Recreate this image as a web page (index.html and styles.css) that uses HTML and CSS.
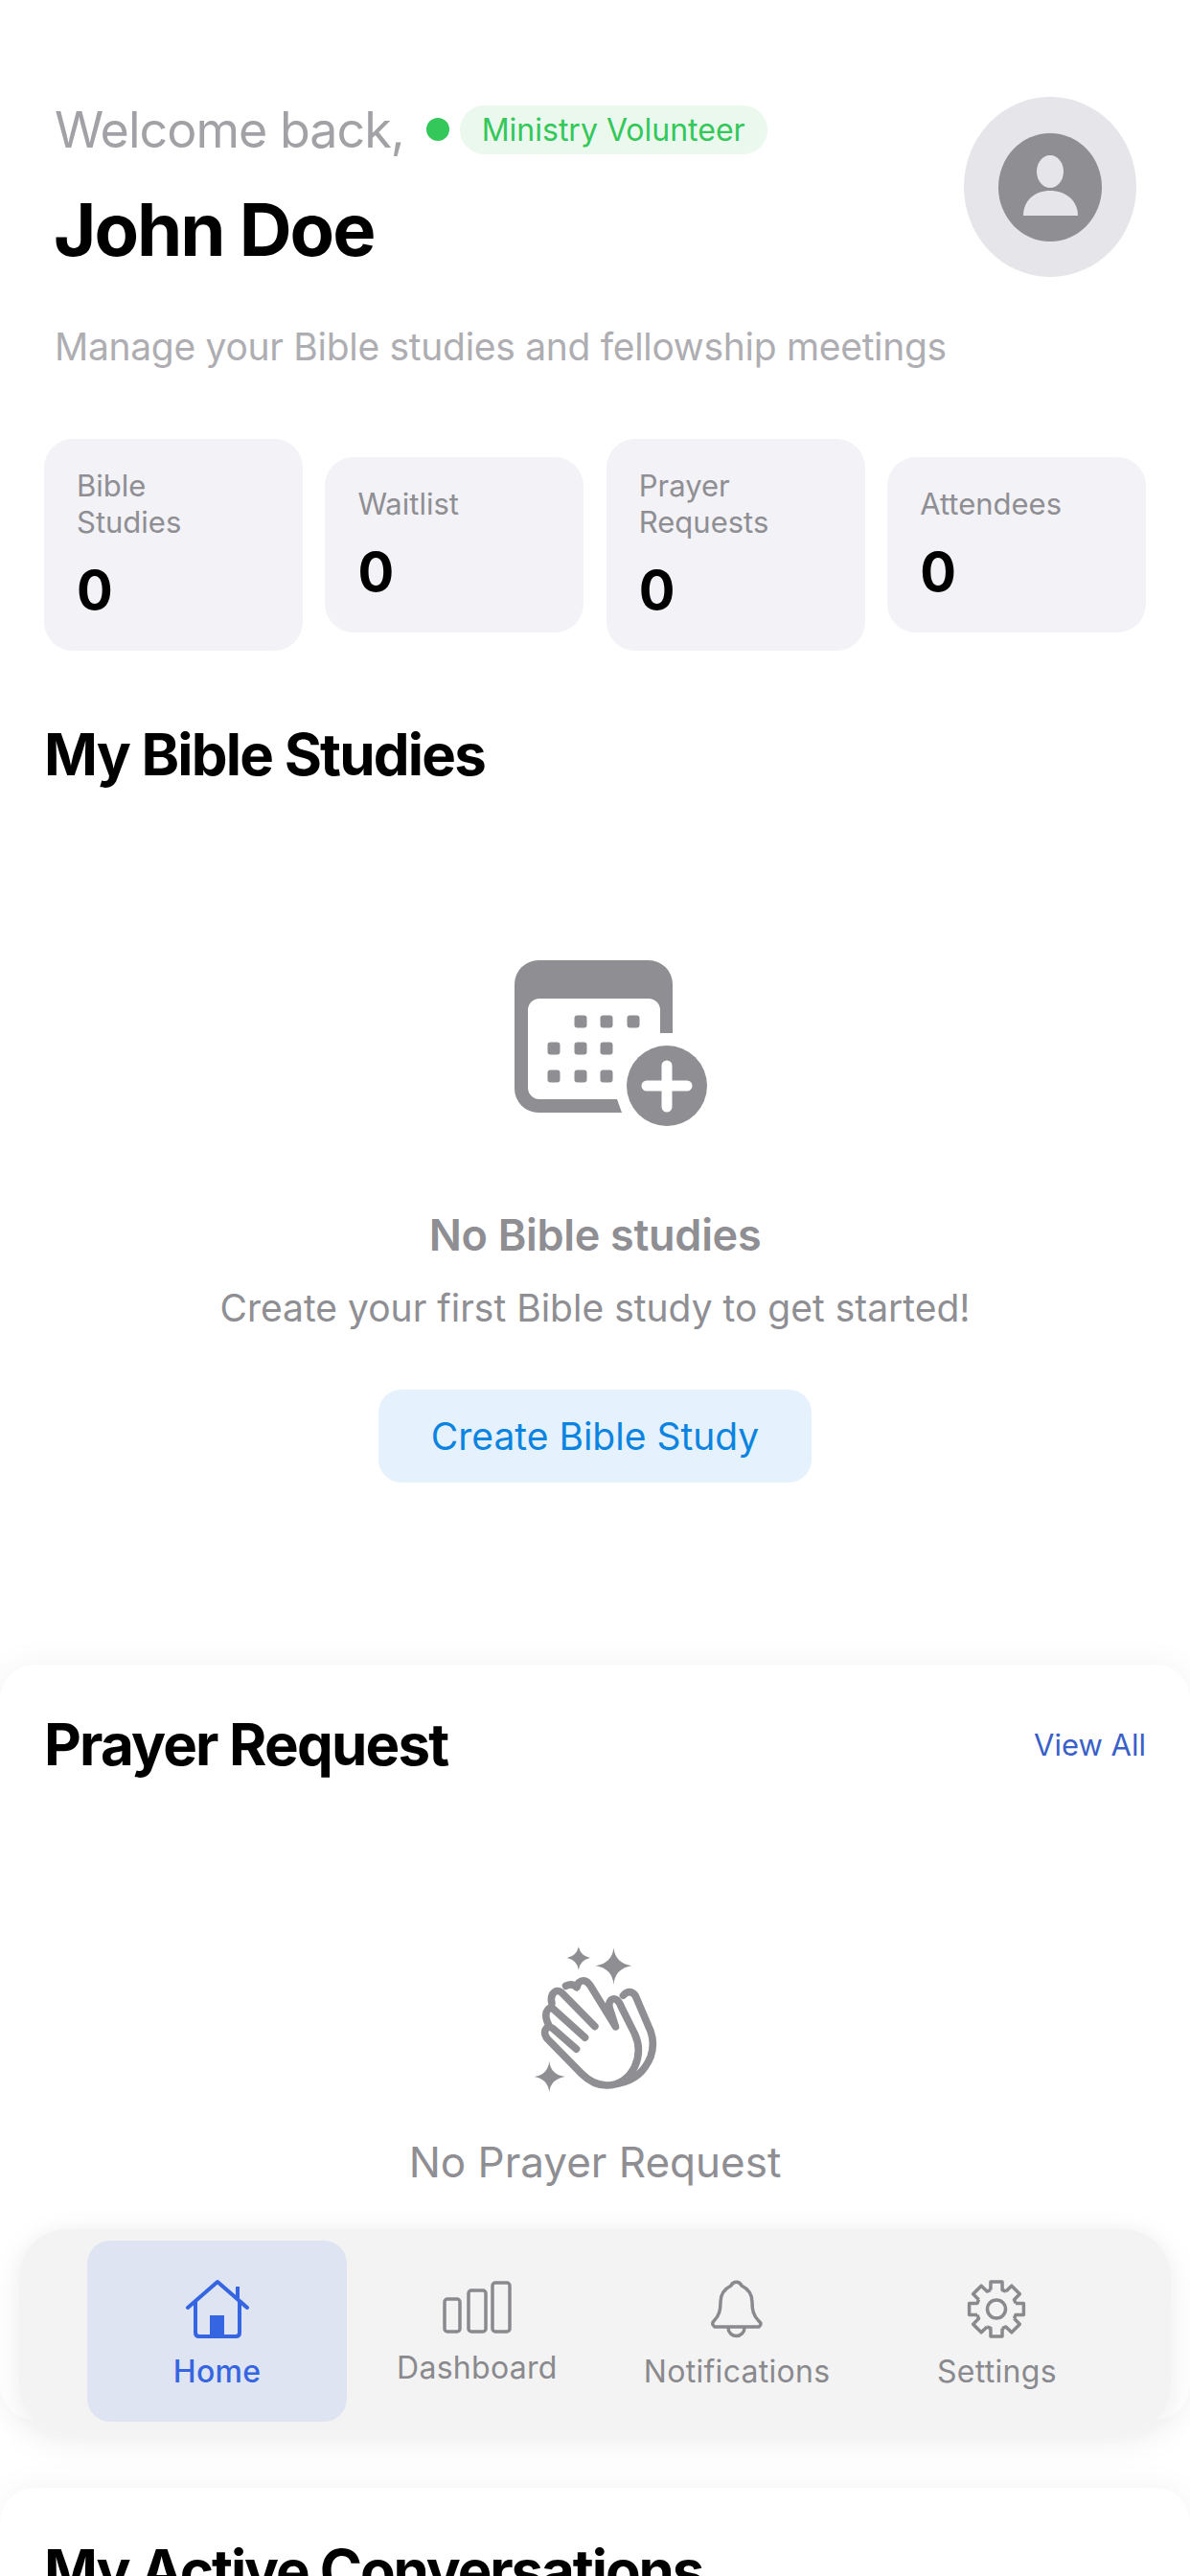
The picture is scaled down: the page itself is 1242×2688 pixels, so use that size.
FILE: index.html
```html
<!DOCTYPE html>
<html lang="en">
<head>
    <meta charset="UTF-8">
    <meta name="viewport" content="width=device-width, initial-scale=1.0">
    <title>Home</title>
    <link rel="stylesheet" href="styles.css">
</head>
<body>
    <main class="page">
        <header class="header">
            <div class="header-text">
                <div class="welcome-row">
                    <span class="welcome">Welcome back,</span>
                    <span class="status-dot"></span>
                    <span class="role-badge">Ministry Volunteer</span>
                </div>
                <h1 class="user-name">John Doe</h1>
                <p class="subtitle">Manage your Bible studies and fellowship meetings</p>
            </div>
            <div class="avatar">
                <svg class="avatar-icon" viewBox="0 0 108 113">
                    <ellipse cx="54" cy="40" rx="14" ry="17" fill="#e5e5ea"/>
                    <path d="M26 86 C26 70 38 60 54 60 C70 60 83 70 83 86 Z" fill="#e5e5ea"/>
                </svg>
            </div>
        </header>

        <section class="stats">
            <div class="stat-card">
                <div class="stat-label">Bible<br>Studies</div>
                <div class="stat-value">0</div>
            </div>
            <div class="stat-card">
                <div class="stat-label">Waitlist</div>
                <div class="stat-value">0</div>
            </div>
            <div class="stat-card">
                <div class="stat-label">Prayer<br>Requests</div>
                <div class="stat-value">0</div>
            </div>
            <div class="stat-card">
                <div class="stat-label">Attendees</div>
                <div class="stat-value">0</div>
            </div>
        </section>

        <section class="studies">
            <h2 class="section-title">My Bible Studies</h2>
            <div class="empty-studies">
                <svg class="calendar-icon" viewBox="38 32 202 174">
                    <path fill-rule="evenodd" fill="#8e8e93" d="M63 32 H178 A25 25 0 0 1 203 57 V108 H190 V84 A12 12 0 0 0 178 72 H64 A12 12 0 0 0 52 84 V165 A12 12 0 0 0 64 177 H145 L150 191 H63 A25 25 0 0 1 38 166 V57 A25 25 0 0 1 63 32 Z"/>
                    <g fill="#8e8e93">
                        <rect x="100.500" y="89.500" width="13" height="13" rx="3"/>
                        <rect x="127.500" y="89.500" width="13" height="13" rx="3"/>
                        <rect x="155.500" y="89.500" width="13" height="13" rx="3"/>
                        <rect x="72.500" y="117.500" width="13" height="13" rx="3"/>
                        <rect x="100.500" y="117.500" width="13" height="13" rx="3"/>
                        <rect x="127.500" y="117.500" width="13" height="13" rx="3"/>
                        <rect x="72.500" y="146.500" width="13" height="13" rx="3"/>
                        <rect x="100.500" y="146.500" width="13" height="13" rx="3"/>
                        <rect x="127.500" y="146.500" width="13" height="13" rx="3"/>
                        <circle cx="197" cy="163" r="42"/>
                    </g>
                    <path d="M197 142 V185 M176 163 H218" stroke="#fff" stroke-width="11" stroke-linecap="round"/>
                </svg>
                <div class="empty-title">No Bible studies</div>
                <div class="empty-text">Create your first Bible study to get started!</div>
                <button class="create-btn">Create Bible Study</button>
            </div>
        </section>

        <section class="card prayer-card">
            <div class="card-head">
                <h2 class="section-title">Prayer Request</h2>
                <a class="view-all">View All</a>
            </div>
            <div class="empty-prayer">
                <svg class="clap-icon" viewBox="100 85 410 475">
                    <g fill="#8e8e93">
                        <path d="M252 93 Q256 123 288 130 Q256 137 252 168 Q248 137 216 130 Q248 123 252 93 Z"/>
                        <path d="M362 98 Q366 146 418 155 Q366 164 362 214 Q358 164 306 155 Q358 146 362 98 Z"/>
                        <path d="M160 454 Q164 496 210 503 Q164 510 160 552 Q156 510 113 503 Q156 496 160 454 Z"/>
                    </g>
                    <g fill="none" stroke="#8e8e93" stroke-width="23" stroke-linecap="round" stroke-linejoin="round">
                        <path d="M245 416 L172 352 Q155 340 147 358 Q143 372 156 386 L262 494 Q298 530 340 530 Q398 530 428 472 Q452 420 428 368 L386 284 Q372 250 354 262 Q344 272 350 290 L368 346 L288 216 Q272 192 252 208 L246 222"/>
                        <path d="M272 380 L172 290 Q158 282 151 300 Q146 318 158 340"/>
                        <path d="M303 345 L200 240 Q184 226 170 244 Q164 256 168 272"/>
                        <path d="M246 222 Q232 208 212 218"/>
                        <path d="M392 248 Q412 226 430 248 L478 360 Q492 400 478 440 Q450 510 378 524"/>
                    </g>
                </svg>
                <div class="empty-label">No Prayer Request</div>
            </div>
        </section>

        <section class="card chat-card">
            <h2 class="section-title">My Active Conversations</h2>
        </section>
    </main>

    <nav class="tabbar">
        <div class="tab tab-active">
            <svg class="tab-icon" width="72" height="65" viewBox="30 26 72 65">
                <path d="M35 57 L66 30 L97 57" fill="none" stroke="#3565e0" stroke-width="4" stroke-linecap="round" stroke-linejoin="round"/>
                <path d="M43 50 V83 Q43 87 47 87 H85 Q89 87 89 83 V50 M87 47 V35" fill="none" stroke="#3565e0" stroke-width="4"/>
                <rect x="58" y="65" width="15" height="22" fill="#3565e0"/>
            </svg>
            <span>Home</span>
        </div>
        <div class="tab tab-dashboard">
            <svg class="tab-icon" width="76" height="60" viewBox="298 28 76 60">
                <g fill="none" stroke="#8a8a8e" stroke-width="3.500">
                    <rect x="302" y="50" width="16" height="34" rx="3"/>
                    <rect x="327" y="41" width="18" height="43" rx="3"/>
                    <rect x="352" y="33" width="18" height="51" rx="3"/>
                </g>
            </svg>
            <span>Dashboard</span>
        </div>
        <div class="tab">
            <svg class="tab-icon" width="60" height="65" viewBox="38 25 60 65">
                <path d="M45 76 H91 Q95 73 91 70 C85 64 84 58 84 50 C84 41 79 36 73 33 C71 28 64 28 62 33 C56 36 51 41 51 50 C51 58 50 64 44 70 Q41 73 45 76 Z" fill="none" stroke="#8a8a8e" stroke-width="3.500" stroke-linejoin="round"/>
                <path d="M59 77 A8.500 8.500 0 0 0 76 77" fill="none" stroke="#8a8a8e" stroke-width="3.500"/>
            </svg>
            <span>Notifications</span>
        </div>
        <div class="tab">
            <svg class="tab-icon" width="64" height="65" viewBox="-32 -32.500 64 65">
                <defs>
                    <path id="gear-tooth" d="M-6.100 -20 L-6 -28.400 L6 -28.400 L6.100 -20 L9.900 -18.500"/>
                </defs>
                <g fill="none" stroke="#8a8a8e" stroke-width="3.500" stroke-linejoin="round">
                    <use href="#gear-tooth"/>
                    <use href="#gear-tooth" transform="rotate(45)"/>
                    <use href="#gear-tooth" transform="rotate(90)"/>
                    <use href="#gear-tooth" transform="rotate(135)"/>
                    <use href="#gear-tooth" transform="rotate(180)"/>
                    <use href="#gear-tooth" transform="rotate(225)"/>
                    <use href="#gear-tooth" transform="rotate(270)"/>
                    <use href="#gear-tooth" transform="rotate(315)"/>
                    <circle r="9.500"/>
                </g>
            </svg>
            <span>Settings</span>
        </div>
    </nav>
</body>
</html>
```

FILE: styles.css
```css
* {
    box-sizing: border-box;
}

html, body {
    margin: 0;
    padding: 0;
}

body {
    position: relative;
    width: 1242px;
    height: 2688px;
    overflow: hidden;
    background: #fff;
    color: #000;
    font-family: Inter, "Noto Sans", sans-serif;
}

h1, h2, p {
    margin: 0;
}

.header {
    display: flex;
    justify-content: space-between;
    padding: 101px 56px 0 57px;
}

.welcome-row {
    display: flex;
    align-items: center;
    height: 60px;
    margin-top: 4px;
}

.welcome {
    font-size: 52px;
    color: #a2a2a6;
    letter-spacing: -1px;
}

.status-dot {
    width: 24px;
    height: 24px;
    margin-left: 23px;
    border-radius: 50%;
    background: #34c759;
}

.role-badge {
    margin-left: 11px;
    padding: 0 23px;
    height: 51px;
    line-height: 51px;
    border-radius: 26px;
    background: #eaf8ee;
    color: #34c759;
    font-size: 32px;
}

.user-name {
    margin-top: 27px;
    margin-left: -1px;
    font-size: 76px;
    line-height: 94px;
    font-weight: 700;
    letter-spacing: -2px;
}

.subtitle {
    margin-top: 51px;
    font-size: 39px;
    line-height: 50px;
    color: #aeaeb2;
    letter-spacing: -0.3px;
}

.avatar {
    display: flex;
    align-items: center;
    justify-content: center;
    width: 180px;
    height: 188px;
    border-radius: 50%;
    background: #e5e5ea;
}

.avatar-icon {
    width: 108px;
    height: 113px;
    border-radius: 50%;
    background: #8e8e93;
}

.stats {
    display: flex;
    align-items: center;
    gap: 23.500px;
    margin-top: 71px;
    padding: 0 46px;
}

.stat-card {
    flex: 1;
    padding: 30px 34px 33px;
    border-radius: 30px;
    background: #f2f2f7;
}

.stat-label {
    font-size: 31px;
    line-height: 38px;
    color: #8e8e93;
}

.stat-value {
    margin-top: 22px;
    font-size: 56px;
    line-height: 60px;
    font-weight: 700;
}

.studies {
    height: 986px;
    padding: 0 46px;
}

.section-title {
    font-size: 60px;
    line-height: 72px;
    font-weight: 700;
    letter-spacing: -1.800px;
}

.studies .section-title {
    margin-top: 72px;
}

.empty-studies {
    display: flex;
    flex-direction: column;
    align-items: center;
    margin-top: 179px;
}

.calendar-icon {
    width: 202px;
    height: 174px;
    margin-left: 33px;
}

.empty-title {
    margin-top: 86px;
    font-size: 45px;
    line-height: 54px;
    font-weight: 600;
    color: #8e8e93;
    letter-spacing: -0.3px;
}

.empty-text {
    margin-top: 25px;
    font-size: 39px;
    line-height: 48px;
    color: #8e8e93;
}

.create-btn {
    width: 452px;
    height: 97px;
    margin-top: 61px;
    border: none;
    border-radius: 24px;
    background: #e5f1fc;
    color: #0a84e0;
    font-family: inherit;
    font-size: 39px;
}

.card {
    border-radius: 36px;
    background: #fff;
    box-shadow: 0 0 36px rgba(0, 0, 0, 0.05);
}

.prayer-card {
    height: 788px;
    padding: 47px 46px 0;
}

.card-head {
    display: flex;
    justify-content: space-between;
    align-items: center;
}

.view-all {
    font-size: 31px;
    color: #3a5fc8;
}

.empty-prayer {
    display: flex;
    flex-direction: column;
    align-items: center;
}

.clap-icon {
    width: 137px;
    height: 158px;
    margin-top: 172px;
}

.empty-label {
    margin-top: 43px;
    font-size: 44px;
    line-height: 54px;
    color: #8e8e93;
}

.chat-card {
    height: 200px;
    margin-top: 71px;
    padding: 50px 46px 0;
}

.chat-card .section-title {
    letter-spacing: -2.100px;
}

.tabbar {
    position: absolute;
    left: 20px;
    top: 2326px;
    display: flex;
    width: 1202px;
    height: 213px;
    padding: 12px 46px 12px 71px;
    border-radius: 50px;
    background: rgba(243, 243, 243, 0.97);
    box-shadow: 0 0 12px rgba(243, 243, 243, 0.9), 0 10px 40px rgba(0, 0, 0, 0.06);
}

.tab {
    display: flex;
    flex: 1;
    flex-direction: column;
    align-items: center;
    padding-top: 39px;
    border-radius: 24px;
    color: #8a8a8e;
    font-size: 32px;
    letter-spacing: 0.3px;
}

.tab span {
    margin-top: 14px;
    line-height: 38px;
}

.tab-active {
    background: #dfe4f2;
    color: #3565e0;
    font-weight: 500;
}

.tab-dashboard span {
    margin-top: 15px;
}
```
